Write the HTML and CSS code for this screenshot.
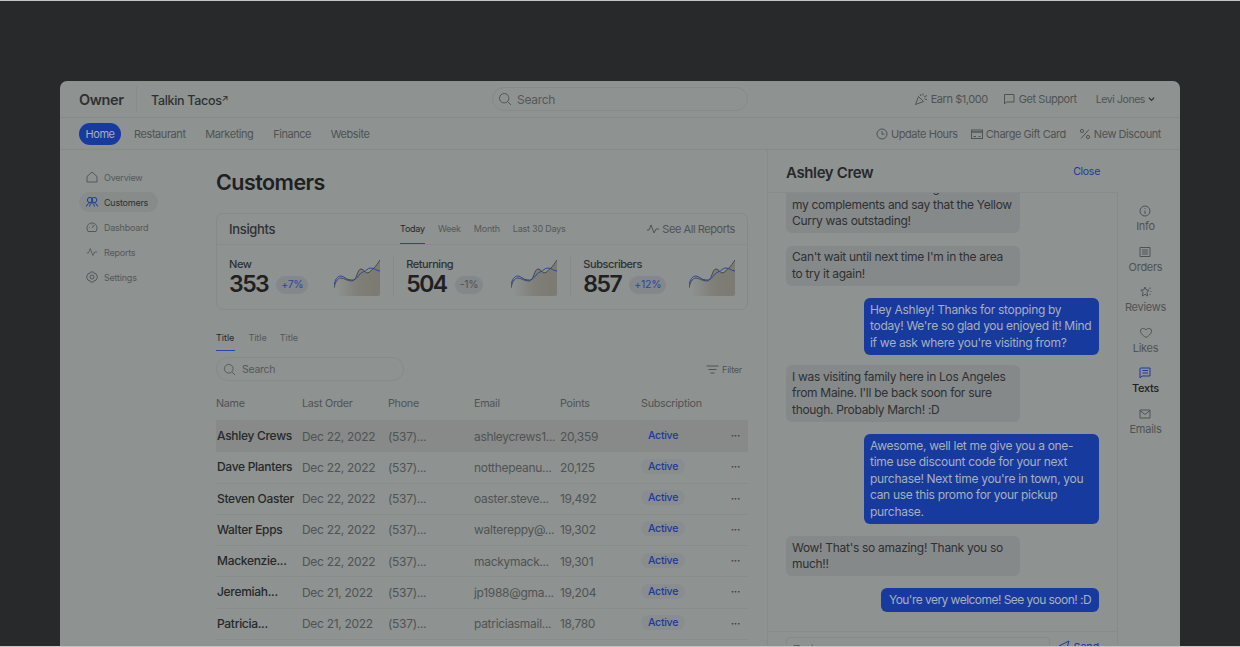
FILE: index.html
```html
<!DOCTYPE html>
<html lang="en">
<head>
    <title>Owner - Customers</title>
    <meta content="width=device-width, initial-scale=1" name="viewport" />
    <link rel="stylesheet" href="styles.css">
</head>
<body>
    <svg class="defs" width="0" height="0">
        <defs>
            <linearGradient id="fade" x1="0" x2="1" y1="0" y2="0">
                <stop offset="0.05" stop-color="#7c7a72" stop-opacity="0" />
                <stop offset="0.55" stop-color="#7c7a72" stop-opacity="0.85" />
                <stop offset="1" stop-color="#7c7a72" />
            </linearGradient>
        </defs>
        <symbol id="spark" viewBox="0 0 46 36">
            <path d="M0 36V28C1 23 3 18 7 18C10 18 13 21 18 21C23 21 23 9 27 9C30 9 31 13 33 13C36 13 38 9 40 8C42 6 44 3 46 0V34Q46 36 44 36Z" fill="url(#fade)" />
            <path d="M0 28C1 23 3 18 7 18C10 18 13 21 18 21C23 21 23 9 27 9C30 9 31 13 33 13C36 13 38 9 40 8C42 6 44 3 46 0" fill="none" stroke="#45474a" stroke-width="1" />
            <path d="M0 25C1 20 3 16 7 16C10 16 12 20 17 20C23 21 25 13 29 12C33 11 33 8 37 8C40 8 43 11 46 11" fill="none" stroke="#2447a8" stroke-width="1" />
        </symbol>
        <symbol id="search" viewBox="0 0 14 14">
            <circle cx="6.2" cy="6.2" r="4.7" fill="none" stroke="currentColor" stroke-width="1" />
            <path d="M9.7 9.7L13 13" fill="none" stroke="currentColor" stroke-width="1" />
        </symbol>
        <symbol id="pulse" viewBox="0 0 14 14">
            <path d="M1 8H3L5 3L8 11L10 7H13" fill="none" stroke="currentColor" stroke-width="1" />
        </symbol>
    </svg>

    <div class="window">
        <header class="topbar">
            <div class="brand">Owner</div>
            <div class="store"><span>Talkin Tacos</span><span class="store-arrow">↗</span></div>
            <div class="top-search">
                <svg class="icon-14"><use href="#search" /></svg>
                <span>Search</span>
            </div>
            <div class="top-links">
                <a class="link">
                    <svg class="icon-14" viewBox="0 0 14 14" fill="none" stroke="currentColor"><path d="M1.5 12.5L4.5 4.5L9.5 9.5Z" /><path d="M6 2L7 4M9 1.5V3.5M10 5L13 3.5M10.5 7L13 7.5" /></svg>
                    <span>Earn $1,000</span>
                </a>
                <a class="link">
                    <svg class="icon-14" viewBox="0 0 14 14" fill="none" stroke="currentColor"><path d="M2.5 2.5H12V10H4.5L2.5 12Z" /></svg>
                    <span>Get Support</span>
                </a>
                <a class="link user"><span>Levi Jones</span><svg class="chev" viewBox="0 0 8 6" fill="none" stroke="currentColor" stroke-width="1.4"><path d="M1 1.5L4 4.5L7 1.5" /></svg></a>
            </div>
        </header>

        <nav class="mainnav">
            <a class="pill">Home</a>
            <a>Restaurant</a>
            <a>Marketing</a>
            <a>Finance</a>
            <a>Website</a>
            <div class="quick">
                <a class="link">
                    <svg class="icon-12" viewBox="0 0 12 12" fill="none" stroke="currentColor"><circle cx="6" cy="6" r="5" /><path d="M6 3V6.2H8.5" /></svg>
                    <span>Update Hours</span>
                </a>
                <a class="link">
                    <svg class="icon-12" viewBox="0 0 12 12" fill="none" stroke="currentColor"><rect x="0.5" y="2" width="11" height="8.5" /><path d="M0.5 4H11.5" stroke-width="1.4" /><path d="M2.5 8.5H5M7.5 8.5H9.5" /></svg>
                    <span>Charge Gift Card</span>
                </a>
                <a class="link">
                    <svg class="icon-12" viewBox="0 0 12 12" fill="none" stroke="currentColor"><path d="M10 1.5L2 10.5" /><circle cx="3" cy="3" r="1.6" /><circle cx="9" cy="9" r="1.6" /></svg>
                    <span>New Discount</span>
                </a>
            </div>
        </nav>

        <div class="content">
            <aside class="sidebar">
                <a class="side-item">
                    <svg class="icon-12" viewBox="0 0 12 12" fill="none" stroke="currentColor"><path d="M1 11V5.5L6 1L11 5.5V11Z" /></svg>
                    <span>Overview</span>
                </a>
                <a class="side-item active">
                    <svg class="icon-12" viewBox="0 0 12 12" fill="none" stroke="currentColor"><circle cx="4" cy="4" r="2.6" /><circle cx="8.2" cy="4" r="2.6" /><path d="M0.5 10.5C1 8 2.5 7 3.5 7M11.5 10.5C11 8 9.7 7 8.7 7M3.5 10.5C4 8 5 7 6 7C7 7 8 8 8.5 10.5" /></svg>
                    <span>Customers</span>
                </a>
                <a class="side-item">
                    <svg class="icon-12" viewBox="0 0 12 12" fill="none" stroke="currentColor"><path d="M2 10.5C-0.5 6 2 2 6 2C10 2 12.5 6 10 10.5Z" /><path d="M6 7L8.5 4M3 6.5H3.8M6 3.5V4.3" /></svg>
                    <span>Dashboard</span>
                </a>
                <a class="side-item">
                    <svg class="icon-12"><use href="#pulse" /></svg>
                    <span>Reports</span>
                </a>
                <a class="side-item">
                    <svg class="icon-12" viewBox="0 0 12 12" fill="none" stroke="currentColor"><path d="M4.5 1H7.5L8.3 2.5L10 2.7L11.5 6L10 9.3L8.3 9.5L7.5 11H4.5L3.7 9.5L2 9.3L0.5 6L2 2.7L3.7 2.5Z" /><circle cx="6" cy="6" r="2" /></svg>
                    <span>Settings</span>
                </a>
            </aside>

            <main class="main">
                <h1>Customers</h1>

                <section class="card">
                    <div class="card-head">
                        <h2>Insights</h2>
                        <div class="tabs range-tabs">
                            <a class="tab on">Today</a>
                            <a class="tab">Week</a>
                            <a class="tab">Month</a>
                            <a class="tab">Last 30 Days</a>
                        </div>
                        <a class="link reports-link">
                            <svg class="icon-14"><use href="#pulse" /></svg>
                            <span>See All Reports</span>
                        </a>
                    </div>
                    <div class="stats">
                        <div class="stat">
                            <div>
                                <div class="stat-label">New</div>
                                <div class="stat-row"><span class="stat-num">353</span><span class="badge up">+7%</span></div>
                            </div>
                            <svg class="spark"><use href="#spark" /></svg>
                        </div>
                        <div class="stat">
                            <div>
                                <div class="stat-label">Returning</div>
                                <div class="stat-row"><span class="stat-num">504</span><span class="badge">-1%</span></div>
                            </div>
                            <svg class="spark"><use href="#spark" /></svg>
                        </div>
                        <div class="stat">
                            <div>
                                <div class="stat-label">Subscribers</div>
                                <div class="stat-row"><span class="stat-num">857</span><span class="badge up">+12%</span></div>
                            </div>
                            <svg class="spark"><use href="#spark" /></svg>
                        </div>
                    </div>
                </section>

                <div class="tabs table-tabs">
                    <a class="tab on">Title</a>
                    <a class="tab">Title</a>
                    <a class="tab">Title</a>
                </div>

                <div class="tools">
                    <div class="table-search">
                        <svg class="icon-13"><use href="#search" /></svg>
                        <span>Search</span>
                    </div>
                    <a class="filter">
                        <svg class="icon-13" viewBox="0 0 13 13" fill="none" stroke="currentColor"><path d="M0.5 3H12.5M2.5 6.5H10.5M4.5 10H8.5" /></svg>
                        <span>Filter</span>
                    </a>
                </div>

                <div class="row thead">
                    <span>Name</span><span>Last Order</span><span>Phone</span><span>Email</span><span>Points</span><span>Subscription</span>
                </div>
                <div class="row hover">
                    <b>Ashley Crews</b><span>Dec 22, 2022</span><span>(537)...</span><span>ashleycrews1...</span><span>20,359</span><em class="plain">Active</em><i>···</i>
                </div>
                <div class="row">
                    <b>Dave Planters</b><span>Dec 22, 2022</span><span>(537)...</span><span>notthepeanu...</span><span>20,125</span><em>Active</em><i>···</i>
                </div>
                <div class="row">
                    <b>Steven Oaster</b><span>Dec 22, 2022</span><span>(537)...</span><span>oaster.steve...</span><span>19,492</span><em>Active</em><i>···</i>
                </div>
                <div class="row">
                    <b>Walter Epps</b><span>Dec 22, 2022</span><span>(537)...</span><span>waltereppy@...</span><span>19,302</span><em>Active</em><i>···</i>
                </div>
                <div class="row">
                    <b>Mackenzie...</b><span>Dec 22, 2022</span><span>(537)...</span><span>mackymack...</span><span>19,301</span><em>Active</em><i>···</i>
                </div>
                <div class="row">
                    <b>Jeremiah...</b><span>Dec 21, 2022</span><span>(537)...</span><span>jp1988@gma...</span><span>19,204</span><em>Active</em><i>···</i>
                </div>
                <div class="row">
                    <b>Patricia...</b><span>Dec 21, 2022</span><span>(537)...</span><span>patriciasmail...</span><span>18,780</span><em>Active</em><i>···</i>
                </div>
            </main>

            <section class="panel">
                <div class="panel-head">
                    <h3>Ashley Crew</h3>
                    <a class="close">Close</a>
                </div>
                <div class="panel-body">
                    <div class="chat">
                        <div class="messages">
                            <p class="msg">Just wanted to send through<br>my complements and say that the Yellow<br>Curry was outstading!</p>
                            <p class="msg">Can't wait until next time I'm in the area<br>to try it again!</p>
                            <p class="msg me">Hey Ashley! Thanks for stopping by<br>today! We're so glad you enjoyed it! Mind<br>if we ask where you're visiting from?</p>
                            <p class="msg tight">I was visiting family here in Los Angeles<br>from Maine. I'll be back soon for sure<br>though. Probably March! :D</p>
                            <p class="msg me">Awesome, well let me give you a one-<br>time use discount code for your next<br>purchase! Next time you're in town, you<br>can use this promo for your pickup<br>purchase.</p>
                            <p class="msg">Wow! That's so amazing! Thank you so<br>much!!</p>
                            <p class="msg me short">You're very welcome! See you soon! :D</p>
                        </div>
                        <div class="composer">
                            <div class="composer-input">Text</div>
                            <a class="send">
                                <svg class="icon-12" viewBox="0 0 12 12" fill="none" stroke="currentColor"><path d="M1 6L11 1L8 11L5.5 7Z" /></svg>
                                <span>Send</span>
                            </a>
                        </div>
                    </div>
                    <div class="rail">
                        <a class="rail-item">
                            <svg class="icon-12" viewBox="0 0 12 12" fill="none" stroke="currentColor"><circle cx="6" cy="6" r="5" /><path d="M6 5.5V9M6 3V4" /></svg>
                            <span>Info</span>
                        </a>
                        <a class="rail-item">
                            <svg class="icon-12" viewBox="0 0 12 12" fill="none" stroke="currentColor"><path d="M1 1.5H11V10.5H1ZM3 4H9M3 6H9M3 8H9" /></svg>
                            <span>Orders</span>
                        </a>
                        <a class="rail-item">
                            <svg class="icon-12" viewBox="0 0 12 12" fill="none" stroke="currentColor"><path d="M5 1L6.3 4H9L7 6.3L7.7 10L5 8.3L2.3 10L3 6.3L0.8 4H3.7Z" /><path d="M10 1.5V3M11 5V6M10 8V9" /></svg>
                            <span>Reviews</span>
                        </a>
                        <a class="rail-item">
                            <svg class="icon-12" viewBox="0 0 12 12" fill="none" stroke="currentColor"><path d="M6 10.5C2 8 0.5 6 0.5 4C0.5 1 4.5 0.5 6 3C7.5 0.5 11.5 1 11.5 4C11.5 6 10 8 6 10.5Z" /></svg>
                            <span>Likes</span>
                        </a>
                        <a class="rail-item active">
                            <svg class="icon-12" viewBox="0 0 12 12" fill="none" stroke="currentColor"><path d="M1.5 1H11V9H3L1 11V1.5ZM3.5 3.5H9M3.5 6H9" /></svg>
                            <span>Texts</span>
                        </a>
                        <a class="rail-item">
                            <svg class="icon-12" viewBox="0 0 12 12" fill="none" stroke="currentColor"><path d="M1 2H11V10H1ZM1 2.5L6 6.5L11 2.5" /></svg>
                            <span>Emails</span>
                        </a>
                    </div>
                </div>
            </section>
        </div>
    </div>
</body>
</html>
```

FILE: styles.css
```css
* {
    box-sizing: border-box;
    letter-spacing: -0.025em;
}
html, body {
    height: 647px;
}
body {
    margin: 0;
    padding-top: 80px;
    overflow: hidden;
    background: #28292b;
    border-top: 1px solid #c4c5c5;
    border-bottom: 1px solid #c4c5c5;
    color: #505354;
    font-family: Inter, 'Noto Sans', sans-serif;
    font-size: 11px;
}
a {
    color: inherit;
    text-decoration: none;
}
svg {
    flex: none;
}
.defs {
    display: block;
}
.icon-12 {
    width: 12px;
    height: 12px;
}
.icon-13 {
    width: 13px;
    height: 13px;
}
.icon-14 {
    width: 14px;
    height: 14px;
}

.window {
    width: 1120px;
    height: 566px;
    margin: 0 auto;
    background: #8e9291;
    border-radius: 7px 7px 0 0;
    display: flex;
    flex-direction: column;
    overflow: hidden;
}

/* top bar */
.topbar {
    height: 37px;
    flex: none;
    display: flex;
    align-items: center;
    padding: 0 19px;
    border-bottom: 1px solid #868a89;
}
.brand {
    width: 57px;
    font-size: 14.5px;
    font-weight: 600;
    color: #2e3031;
}
.store {
    width: 356px;
    padding-left: 14px;
    height: 26px;
    line-height: 24px;
    border-left: 1px solid #878b8a;
    font-size: 12.5px;
    font-weight: 500;
    color: #2e3031;
}
.store-arrow {
    font-size: 9px;
    vertical-align: 4px;
}
.top-search {
    width: 256px;
    height: 24px;
    display: flex;
    align-items: center;
    gap: 5px;
    padding-left: 5px;
    border: 1px solid #868a8a;
    border-radius: 12px;
    font-size: 12px;
    color: #55585a;
}
.top-links {
    margin-left: auto;
    display: flex;
    align-items: center;
    gap: 14px;
}
.link {
    display: flex;
    align-items: center;
    gap: 3px;
    font-size: 11px;
    color: #505354;
}
.link span {
    letter-spacing: -0.04em;
}
.user {
    margin-left: 5px;
    margin-right: 6px;
    font-size: 10.5px;
}
.chev {
    width: 7px;
    height: 6px;
    color: #2e3031;
}

/* main nav */
.mainnav {
    height: 32px;
    flex: none;
    display: flex;
    align-items: center;
    gap: 19.7px;
    padding: 0 19px;
    border-bottom: 1px solid #868a89;
    font-size: 11px;
    color: #505354;
}
.mainnav > a {
    letter-spacing: -0.04em;
}
.pill {
    margin-right: -6.7px;
    padding: 0 6.5px;
    height: 22px;
    line-height: 22px;
    background: #173a9f;
    border-radius: 11px;
    color: #a9b0ba;
}
.quick {
    margin-left: auto;
    display: flex;
    gap: 13px;
}

/* layout */
.content {
    flex: 1;
    min-height: 0;
    display: flex;
}
.sidebar {
    width: 156px;
    flex: none;
    padding: 17px 0 0 19px;
    display: flex;
    flex-direction: column;
    gap: 5px;
}
.side-item {
    width: 79px;
    height: 20px;
    display: flex;
    align-items: center;
    gap: 6px;
    padding-left: 7px;
    border-radius: 10px;
    font-size: 9px;
    color: #55585a;
}
.side-item.active {
    background: #878b8a;
    color: #2e3031;
}
.side-item.active svg {
    color: #173a9f;
}

.main {
    width: 532px;
    flex: none;
    padding-top: 19px;
}
h1 {
    margin: 0;
    height: 26px;
    line-height: 26px;
    font-size: 21.5px;
    font-weight: 600;
    color: #1e2021;
}
.card {
    height: 97px;
    margin-top: 18px;
    border: 1px solid #868a89;
    border-radius: 7px;
}
.card-head {
    height: 31px;
    display: flex;
    align-items: flex-end;
    padding: 0 12px;
    border-bottom: 1px solid #878b8a;
}
h2 {
    width: 171px;
    margin: 0;
    align-self: center;
    font-size: 13px;
    font-weight: 500;
    color: #2e3031;
}
.tabs {
    display: flex;
    gap: 13px;
    font-size: 9px;
}
.tab {
    padding: 0 0 9px;
    border-bottom: 1px solid transparent;
    color: #55585a;
}
.tab.on {
    border-bottom-color: #2447a8;
    color: #26282a;
}
.reports-link {
    margin-left: auto;
    align-self: center;
    gap: 2px;
}
.stats {
    height: 64px;
    display: flex;
}
.stat {
    flex: 1;
    height: 40px;
    margin-top: 12px;
    padding: 0 12.5px;
    display: flex;
    justify-content: space-between;
    align-items: flex-start;
    border-left: 1px solid #878b8a;
}
.stat:first-child {
    border-left: 0;
    padding-left: 12px;
}
.stat-label {
    height: 14px;
    padding-top: 1px;
    line-height: 13px;
    font-size: 11px;
    font-weight: 500;
    letter-spacing: -0.04em;
    color: #2e3031;
}
.stat-row {
    margin-top: -1px;
    display: flex;
    align-items: center;
    gap: 8px;
}
.stat-num {
    font-size: 23px;
    font-weight: 600;
    line-height: 28px;
    letter-spacing: -1.5px;
    color: #1e2021;
}
.badge {
    height: 18px;
    line-height: 18px;
    padding: 0 5px;
    margin-top: 1px;
    background: #84888a;
    border-radius: 9px;
    font-size: 10.5px;
    color: #505354;
}
.badge.up {
    color: #2447a8;
}
.spark {
    width: 46px;
    height: 36px;
    margin-top: 3px;
}

.table-tabs {
    margin-top: 22px;
    height: 19px;
}
.table-tabs .tab {
    padding-bottom: 6px;
    letter-spacing: 0;
}
.table-tabs .tab:first-child {
    padding-right: 1px;
}
.tools {
    height: 24px;
    margin-top: 6px;
    display: flex;
    align-items: center;
    justify-content: space-between;
}
.table-search {
    width: 188px;
    height: 24px;
    display: flex;
    align-items: center;
    gap: 6px;
    padding-left: 6px;
    border: 1px solid #868a8a;
    border-radius: 12px;
    font-size: 10.5px;
    color: #55585a;
}
.filter {
    display: flex;
    align-items: center;
    gap: 3px;
    padding-right: 6px;
    font-size: 9px;
}
.row {
    display: grid;
    grid-template-columns: 86px 86px 86px 86px 81px 84px 1fr;
    align-items: center;
    height: 31.25px;
    border-bottom: 1px solid #878b8a;
    font-size: 12px;
}
.row b {
    margin-bottom: 1px;
    padding-left: 1px;
    font-weight: 500;
    color: #26282a;
}
.row i {
    margin-bottom: 2px;
    padding-right: 8px;
    text-align: right;
    font-style: normal;
    font-weight: 700;
    font-size: 10px;
    color: #3e4042;
}
.row em {
    justify-self: start;
    margin-bottom: 2px;
    padding: 1px 7px;
    background: #8a8d8e;
    border-radius: 9px;
    font-style: normal;
    font-size: 10.5px;
    font-weight: 500;
    color: #173a9f;
}
.row em.plain {
    background: none;
}
.thead {
    height: 27px;
    margin-top: 13px;
    padding-bottom: 7px;
    font-size: 10.75px;
}
.hover {
    background: #878a88;
}

/* customer panel */
.panel {
    width: 413px;
    flex: none;
    margin-left: 19px;
    display: flex;
    flex-direction: column;
    border-left: 1px solid #878b8a;
}
.panel-head {
    height: 42px;
    flex: none;
    display: flex;
    align-items: center;
    justify-content: space-between;
    padding: 2px 80px 0 18px;
}
h3 {
    margin: 0;
    font-size: 15px;
    font-weight: 600;
    color: #26282a;
}
.close {
    margin-bottom: 1px;
    font-size: 10.5px;
    color: #173a9f;
}
.panel-body {
    flex: 1;
    min-height: 0;
    display: flex;
}
.chat {
    width: 350px;
    flex: none;
    display: flex;
    flex-direction: column;
    border-top: 1px solid #878b8a;
    border-right: 1px solid #878b8a;
}
.messages {
    flex: 1;
    min-height: 0;
    overflow: hidden;
    display: flex;
    flex-direction: column;
    justify-content: flex-end;
    gap: 12.5px;
    padding: 0 18px 19px;
}
.msg {
    width: 234px;
    flex: none;
    margin: 0;
    padding: 3.5px 6px;
    background: #86898a;
    border-radius: 6px;
    font-size: 12px;
    line-height: 16.5px;
    color: #2e3031;
}
.msg.tight {
    margin-top: -2px;
}
.msg.me {
    align-self: flex-end;
    width: 235px;
    background: #173a9f;
    color: #a9b0ba;
}
.msg.short {
    width: auto;
    margin-top: -1px;
    padding: 4px 8px;
    letter-spacing: -0.045em;
}
.composer {
    height: 16px;
    flex: none;
    display: flex;
    gap: 8px;
    padding: 5px 18px 0;
    border-top: 1px solid #878b8a;
}
.composer-input {
    width: 266px;
    height: 30px;
    padding: 4px 6px;
    border: 1px solid #868a8a;
    border-radius: 4px;
    color: #55585a;
}
.send {
    display: flex;
    gap: 3px;
    padding-top: 3px;
    color: #173a9f;
}
.rail {
    flex: 1;
    display: flex;
    flex-direction: column;
    align-items: center;
    padding: 13px 7px 0 0;
    gap: 12.6px;
}
.rail-item {
    display: flex;
    flex-direction: column;
    align-items: center;
    gap: 2px;
    font-size: 11px;
    line-height: 14px;
}
.rail-item.active {
    font-weight: 500;
    color: #1e2021;
}
.rail-item.active svg {
    color: #173a9f;
}
```
